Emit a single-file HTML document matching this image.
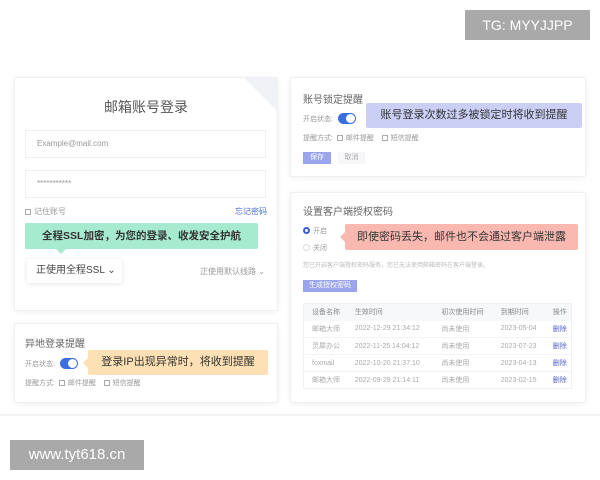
<!DOCTYPE html>
<html><head><meta charset="utf-8"><style>
*{margin:0;padding:0;box-sizing:border-box}
body{width:600px;height:480px;background:#fff;position:relative;overflow:hidden;font-family:"Liberation Sans","Noto Sans CJK SC",sans-serif;color:#666}
.a{position:absolute;white-space:nowrap}
.card{position:absolute;background:#fff;border:1px solid #eef0f3;box-shadow:0 1px 6px rgba(0,0,0,.06);border-radius:2px}
.s{font-size:7px;color:#999}
.tog{position:absolute;width:18px;height:11px;border-radius:6px;background:#3b6fe0}
.tog:after{content:"";position:absolute;right:1px;top:1px;width:9px;height:9px;border-radius:50%;background:#fff}
.cb{display:inline-block;width:6px;height:6px;border:1px solid #aaa;margin-right:3px;vertical-align:-1px}
.bub{position:absolute;font-size:11px;color:#333;text-align:center;border-radius:2px}
td{font-size:7px;color:#aaa;height:17px;padding-left:8px}
</style></head><body>
<div class="a" style="left:465px;top:10px;width:125px;height:30px;background:#a9a9a9;color:#fff;font-size:14px;line-height:30px;text-align:center">TG: MYYJJPP</div>

<div class="card" style="left:14px;top:77px;width:264px;height:234px"></div>
<div class="a" style="left:244px;top:78px;width:0;height:0;border-top:33px solid #f0f2f5;border-left:33px solid transparent"></div>
<div class="a" style="left:14px;top:97px;width:264px;text-align:center;font-size:14px;color:#555">邮箱账号登录</div>
<div class="a" style="left:25px;top:130px;width:241px;height:28px;border:1px solid #eef0f3;font-size:8px;color:#999;line-height:26px;padding-left:11px">Example@mail.com</div>
<div class="a" style="left:25px;top:170px;width:241px;height:28px;border:1px solid #eef0f3;font-size:8px;color:#999;line-height:26px;padding-left:11px">***********</div>
<div class="a s" style="left:25px;top:206px;font-size:8px"><span class="cb"></span>记住账号</div>
<div class="a" style="left:235px;top:206px;font-size:8px;color:#4a6fd0">忘记密码</div>
<div class="bub" style="left:25px;top:223px;width:233px;height:26px;background:#a6ead0;line-height:26px;font-weight:bold;font-size:10.5px">全程SSL加密，为您的登录、收发安全护航</div>
<div class="a" style="left:56px;top:249px;border-top:5px solid #a6ead0;border-left:5px solid transparent;border-right:5px solid transparent"></div>
<div class="a" style="left:27px;top:259px;width:95px;height:24px;background:#fff;box-shadow:0 1px 5px rgba(0,0,0,.1);font-size:10px;color:#444;line-height:24px;padding-left:9px">正使用全程SSL ⌄</div>
<div class="a s" style="left:200px;top:266px;font-size:8px">正使用默认线路 ⌄</div>

<div class="card" style="left:14px;top:323px;width:264px;height:80px"></div>
<div class="a" style="left:25px;top:335px;font-size:10px;color:#666">异地登录提醒</div>
<div class="a s" style="left:25px;top:359px">开启状态:</div>
<div class="tog" style="left:60px;top:358px"></div>
<div class="bub" style="left:88px;top:350px;width:180px;height:25px;background:#fde0b3;line-height:25px">登录IP出现异常时，将收到提醒</div>
<div class="a" style="left:83px;top:358px;border-right:5px solid #fde0b3;border-top:5px solid transparent;border-bottom:5px solid transparent"></div>
<div class="a s" style="left:25px;top:378px">提醒方式: &nbsp;<span class="cb"></span>邮件提醒 &nbsp;&nbsp;&nbsp;<span class="cb"></span>短信提醒</div>

<div class="card" style="left:290px;top:77px;width:296px;height:100px"></div>
<div class="a" style="left:303px;top:91px;font-size:10px;color:#666">账号锁定提醒</div>
<div class="a s" style="left:303px;top:114px">开启状态:</div>
<div class="tog" style="left:338px;top:113px"></div>
<div class="bub" style="left:366px;top:103px;width:216px;height:25px;background:#cbcff6;line-height:25px">账号登录次数过多被锁定时将收到提醒</div>
<div class="a s" style="left:303px;top:133px">提醒方式: &nbsp;<span class="cb"></span>邮件提醒 &nbsp;&nbsp;&nbsp;<span class="cb"></span>短信提醒</div>
<div class="a" style="left:303px;top:152px;width:28px;height:12px;background:#9ba5ee;color:#fff;font-size:7px;text-align:center;line-height:12px">保存</div>
<div class="a" style="left:338px;top:152px;width:27px;height:12px;background:#f7f7f9;color:#aaa;font-size:7px;text-align:center;line-height:12px">取消</div>

<div class="card" style="left:290px;top:192px;width:296px;height:211px"></div>
<div class="a" style="left:303px;top:203px;font-size:10px;color:#666">设置客户端授权密码</div>
<div class="a s" style="left:303px;top:226px"><span style="display:inline-block;width:7px;height:7px;border:2px solid #3b5bd6;border-radius:50%;margin-right:3px;vertical-align:-1px"></span>开启</div>
<div class="a s" style="left:303px;top:243px"><span style="display:inline-block;width:7px;height:7px;border:1px solid #ddd;border-radius:50%;margin-right:3px;vertical-align:-1px"></span>关闭</div>
<div class="bub" style="left:345px;top:224px;width:233px;height:26px;background:#f9b9b1;line-height:26px">即使密码丢失，邮件也不会通过客户端泄露</div>
<div class="a" style="left:340px;top:232px;border-right:5px solid #f9b9b1;border-top:5px solid transparent;border-bottom:5px solid transparent"></div>
<div class="a" style="left:303px;top:260px;font-size:6px;color:#bbb">您已开启客户端授权密码服务，您已无法使用邮箱密码在客户端登录。</div>
<div class="a" style="left:303px;top:280px;width:54px;height:12px;background:#9ba5ee;color:#fff;font-size:7px;text-align:center;line-height:12px">生成授权密码</div>
<table class="a" style="left:303px;top:303px;width:269px;border-collapse:collapse;border:1px solid #f0f1f4">
<tr style="background:#f7f8fa"><td style="color:#888">设备名称</td><td style="color:#888">生效时间</td><td style="color:#888">初次使用时间</td><td style="color:#888">到期时间</td><td style="color:#888">操作</td></tr>
<tr><td>邮箱大师</td><td>2022-12-29 21:34:12</td><td>尚未使用</td><td>2023-05-04</td><td style="color:#5566cc">删除</td></tr>
<tr style="border-top:1px solid #f3f3f5"><td>灵犀办公</td><td>2022-11-25 14:04:12</td><td>尚未使用</td><td>2023-07-23</td><td style="color:#5566cc">删除</td></tr>
<tr style="border-top:1px solid #f3f3f5"><td>foxmail</td><td>2022-10-20 21:37:10</td><td>尚未使用</td><td>2023-04-13</td><td style="color:#5566cc">删除</td></tr>
<tr style="border-top:1px solid #f3f3f5"><td>邮箱大师</td><td>2022-09-29 21:14:11</td><td>尚未使用</td><td>2023-02-15</td><td style="color:#5566cc">删除</td></tr>
</table>

<div class="a" style="left:0;top:414px;width:600px;height:2px;background:#f3f4f6"></div>
<div class="a" style="left:10px;top:440px;width:134px;height:30px;background:#a9a9a9;color:#fff;font-size:15px;line-height:30px;text-align:center">www.tyt618.cn</div>
</body></html>
